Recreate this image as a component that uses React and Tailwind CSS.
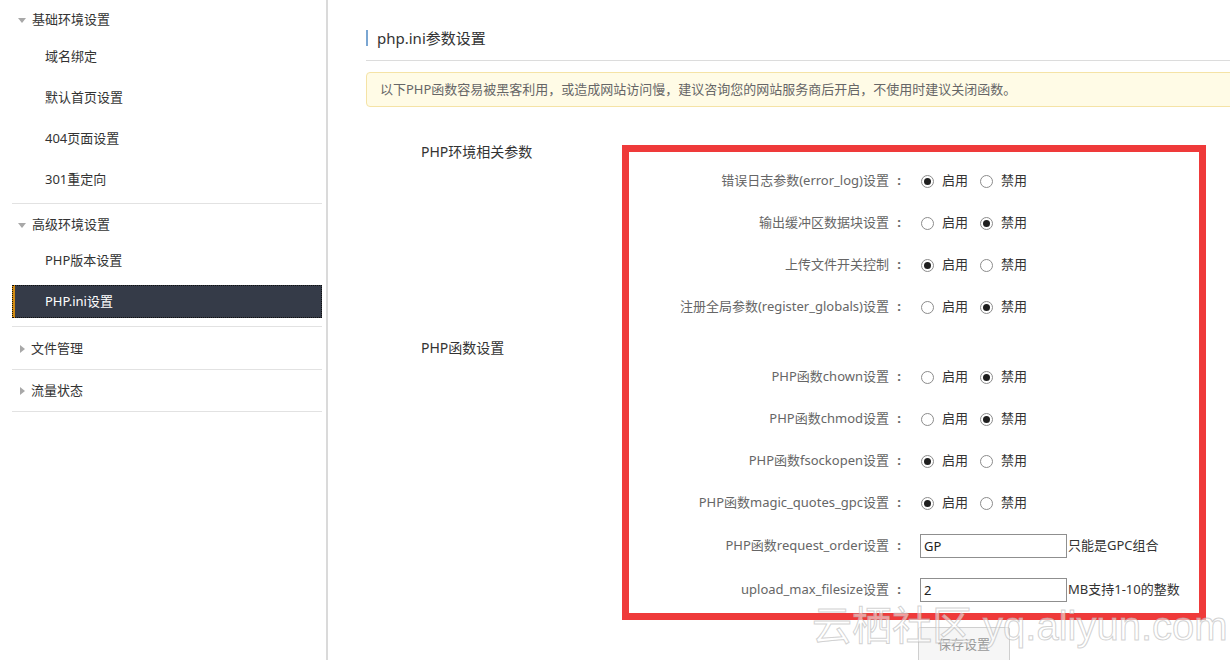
import React from 'react';

const font = "font-['Noto_Sans','Noto_Sans_CJK_SC',sans-serif]";

const Radio = ({ checked }) => (
  <span className="w-[13px] h-[13px] rounded-full border border-[#8c8c8c] bg-white flex items-center justify-center shrink-0">
    {checked && <span className="w-[7px] h-[7px] rounded-full bg-[#1f1f1f]" />}
  </span>
);

const DownArrow = () => (
  <span className="w-0 h-0 border-x-4 border-x-transparent border-t-[5px] border-t-[#a8a8a8]" />
);

const RightArrow = () => (
  <span className="w-0 h-0 border-y-4 border-y-transparent border-l-[5px] border-l-[#a8a8a8] ml-[2px]" />
);

const Sidebar = () => (
  <aside className="w-[328px] shrink-0 h-full border-r-2 border-[#dadada] pl-[12px] pr-[4px] text-[13px] text-[#333]">
    <div className="border-b border-[#e2e2e2] pb-[3px]">
      <div className="h-[36px] pt-[4px] flex items-center gap-[6px] pl-[6px]">
        <DownArrow />
        <span>基础环境设置</span>
      </div>
      {['域名绑定', '默认首页设置', '404页面设置', '301重定向'].map((t) => (
        <div key={t} className="h-[41px] flex items-center pl-[33px]">
          {t}
        </div>
      ))}
    </div>
    <div className="border-b border-[#e2e2e2] pb-[8px]">
      <div className="h-[42px] flex items-center gap-[6px] pl-[6px]">
        <DownArrow />
        <span>高级环境设置</span>
      </div>
      <div className="h-[30px] flex items-center pl-[33px]">PHP版本设置</div>
      <div className="mt-[9px] h-[33px] flex items-center pl-[30px] bg-[#353b48] border-l-[3px] border-[#d18b12] text-white outline-1 outline-dotted outline-[#111] -outline-offset-1">
        PHP.ini设置
      </div>
    </div>
    <div className="border-b border-[#e2e2e2] h-[43px] pt-[2px] flex items-center gap-[6px] pl-[6px]">
      <RightArrow />
      <span>文件管理</span>
    </div>
    <div className="border-b border-[#e2e2e2] h-[42px] flex items-center gap-[6px] pl-[6px]">
      <RightArrow />
      <span>流量状态</span>
    </div>
  </aside>
);

const radioRows1 = [
  { label: '错误日志参数(error_log)设置', on: true },
  { label: '输出缓冲区数据块设置', on: false },
  { label: '上传文件开关控制', on: true },
  { label: '注册全局参数(register_globals)设置', on: false },
];

const radioRows2 = [
  { label: 'PHP函数chown设置', on: false },
  { label: 'PHP函数chmod设置', on: false },
  { label: 'PHP函数fsockopen设置', on: true },
  { label: 'PHP函数magic_quotes_gpc设置', on: true },
];

const Label = ({ children }) => (
  <div className="w-[480px] flex justify-end text-[13px] text-[#666]">
    <span>{children}</span>
    <span className="w-[12px] text-right font-bold">:</span>
  </div>
);

const RadioRow = ({ label, on }) => (
  <div className="h-[42px] flex items-center">
    <Label>{label}</Label>
    <div className="ml-[20px] flex items-center text-[13px] text-[#333]">
      <Radio checked={on} />
      <span className="ml-[8px]">启用</span>
      <span className="ml-[12px]">
        <Radio checked={!on} />
      </span>
      <span className="ml-[8px]">禁用</span>
    </div>
  </div>
);

const InputRow = ({ label, value, hint }) => (
  <div className="h-[44px] flex items-center">
    <Label>{label}</Label>
    <input
      readOnly
      value={value}
      className="ml-[19px] w-[147px] h-[24px] border border-[#8f8f8f] pl-[3px] text-[13px] text-[#222] outline-none"
    />
    <span className="ml-[1px] text-[13px] text-[#333]">{hint}</span>
  </div>
);

export default function App() {
  return (
    <div className={`relative w-[1230px] h-[660px] overflow-hidden bg-white flex ${font}`}>
      <Sidebar />
      <main className="flex-1 pl-[38px] pt-[30px]">
        <div className="border-b border-[#dcdcdc] pb-[14px]">
          <div className="h-[16px] border-l-2 border-[#7aa6d2] pl-[9px] flex items-center text-[15px] text-[#333]">
            php.ini参数设置
          </div>
        </div>
        <div className="mt-[11px] mr-[-6px] h-[35px] rounded-[4px] border border-[#f5e3a6] bg-[#fffbe6] pl-[13px] flex items-center text-[13px] text-[#666]">
          以下PHP函数容易被黑客利用，或造成网站访问慢，建议咨询您的网站服务商后开启，不使用时建议关闭函数。
        </div>
        <div className="pl-[55px] mt-[35px]">
          <div className="h-[18px] flex items-center text-[14px] text-[#333]">PHP环境相关参数</div>
          {radioRows1.map((r) => (
            <RadioRow key={r.label} {...r} />
          ))}
          <div className="mt-[10px] h-[18px] flex items-center text-[14px] text-[#333]">PHP函数设置</div>
          {radioRows2.map((r) => (
            <RadioRow key={r.label} {...r} />
          ))}
          <InputRow label="PHP函数request_order设置" value="GP" hint="只能是GPC组合" />
          <InputRow label="upload_max_filesize设置" value="2" hint="MB支持1-10的整数" />
          <div className="mt-[15px] flex">
            <div className="w-[480px]" />
            <button className="ml-[17px] w-[92px] h-[36px] border border-[#cfcfcf] bg-[#f6f6f6] rounded-[2px] text-[13px] text-[#999]">
              保存设置
            </button>
          </div>
        </div>
      </main>

      {/* red annotation frame over the form */}
      <div className="absolute left-[622px] top-[145px] w-[584px] h-[475px] border-[7px] border-[#ef3a3a] pointer-events-none" />

      {/* watermark */}
      <div className="absolute left-[812px] top-[602px] pointer-events-none whitespace-nowrap text-[40px] leading-[48px] text-white/50 [-webkit-text-stroke:1px_rgba(180,180,180,0.6)] font-['Liberation_Sans','Noto_Sans_CJK_SC',sans-serif]">
        云栖社区 yq.aliyun.com
      </div>
    </div>
  );
}
